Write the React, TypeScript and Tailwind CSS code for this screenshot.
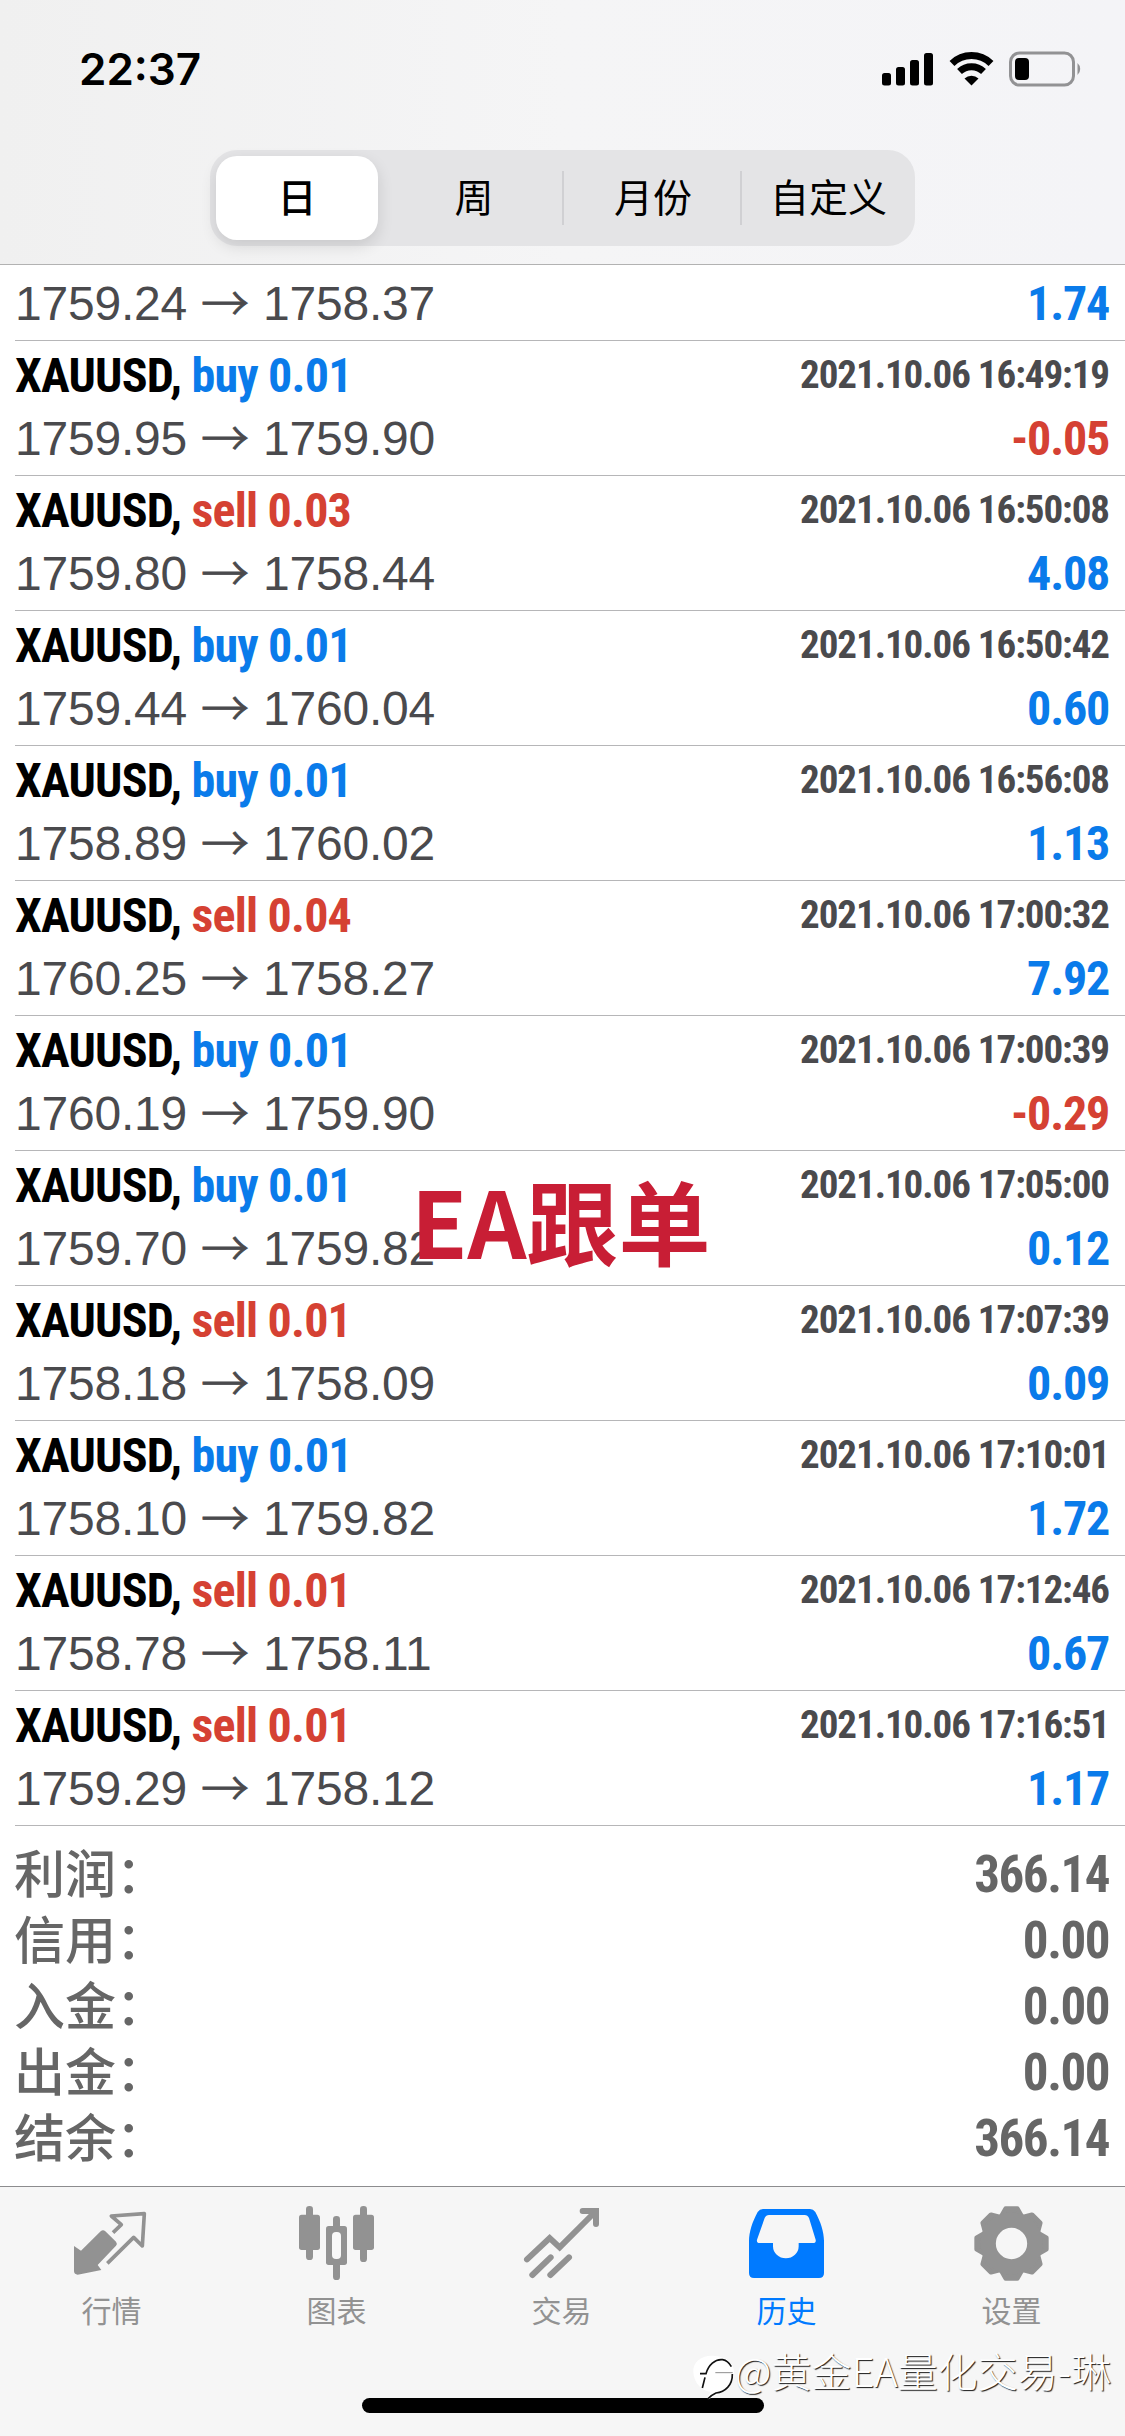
import type { ReactNode } from 'react';
import clsx from 'clsx';

interface Deal {
  side: 'buy' | 'sell';
  volume: string;
  time: string;
  open: string;
  close: string;
  profit: string;
}

const deals: Deal[] = [
  { side: 'buy', volume: '0.01', time: '2021.10.06 16:49:19', open: '1759.95', close: '1759.90', profit: '-0.05' },
  { side: 'sell', volume: '0.03', time: '2021.10.06 16:50:08', open: '1759.80', close: '1758.44', profit: '4.08' },
  { side: 'buy', volume: '0.01', time: '2021.10.06 16:50:42', open: '1759.44', close: '1760.04', profit: '0.60' },
  { side: 'buy', volume: '0.01', time: '2021.10.06 16:56:08', open: '1758.89', close: '1760.02', profit: '1.13' },
  { side: 'sell', volume: '0.04', time: '2021.10.06 17:00:32', open: '1760.25', close: '1758.27', profit: '7.92' },
  { side: 'buy', volume: '0.01', time: '2021.10.06 17:00:39', open: '1760.19', close: '1759.90', profit: '-0.29' },
  { side: 'buy', volume: '0.01', time: '2021.10.06 17:05:00', open: '1759.70', close: '1759.82', profit: '0.12' },
  { side: 'sell', volume: '0.01', time: '2021.10.06 17:07:39', open: '1758.18', close: '1758.09', profit: '0.09' },
  { side: 'buy', volume: '0.01', time: '2021.10.06 17:10:01', open: '1758.10', close: '1759.82', profit: '1.72' },
  { side: 'sell', volume: '0.01', time: '2021.10.06 17:12:46', open: '1758.78', close: '1758.11', profit: '0.67' },
  { side: 'sell', volume: '0.01', time: '2021.10.06 17:16:51', open: '1759.29', close: '1758.12', profit: '1.17' },
];

const totals = [
  { label: '利润：', value: '366.14' },
  { label: '信用：', value: '0.00' },
  { label: '入金：', value: '0.00' },
  { label: '出金：', value: '0.00' },
  { label: '结余：', value: '366.14' },
];

const CONDENSED = "font-['Roboto','Liberation_Sans',sans-serif] [font-stretch:75%] font-bold";
const CJK = "font-['Noto_Sans_CJK_SC',sans-serif]";

function StatusBar() {
  return (
    <div className="flex h-[138px] items-center justify-between pl-[79px] pr-[43px]">
      <span className="font-['Inter',sans-serif] text-[44px] font-semibold leading-none">22:37</span>
      <div className="flex items-center gap-[15px]">
        <svg width="52" height="34" viewBox="0 0 52 34">
          <rect x="0" y="21" width="9" height="12.500" rx="2.500" />
          <rect x="14" y="15" width="9" height="18.500" rx="2.500" />
          <rect x="28" y="8" width="9" height="25.500" rx="2.500" />
          <rect x="42" y="1" width="9" height="32.500" rx="2.500" />
        </svg>
        <svg width="45" height="34" viewBox="0 0 45 34">
          <path d="M3 11.500a28 28 0 0 1 39 0M10.500 19.500a17.500 17.500 0 0 1 24 0" fill="none" stroke="#000" strokeWidth="7" />
          <path d="M15.500 26.500a10.500 10.500 0 0 1 14 0L22.500 33.500z" />
        </svg>
        <svg width="73" height="36" viewBox="0 0 73 36">
          <rect x="1.500" y="2" width="63" height="32" rx="9" fill="none" stroke="#929294" strokeWidth="3" />
          <rect x="6" y="7" width="14" height="22" rx="4" />
          <path d="M68.500 12a8 8 0 0 1 0 12z" fill="#929294" />
        </svg>
      </div>
    </div>
  );
}

function PeriodPicker() {
  return (
    <div className={`${CJK} mx-auto mt-3 flex h-24 w-[705px] items-center rounded-[27px] bg-[#e4e4e6] text-[39px] leading-none`}>
      <div className="flex h-full w-[174px] items-center pl-[6px]">
        <div className="flex h-[84px] w-[162px] items-center justify-center rounded-[21px] bg-white pb-[5px] font-medium shadow-[0_6px_16px_rgba(0,0,0,0.12)]">
          日
        </div>
      </div>
      <div className="w-[178px] pb-[5px] pl-[2px] text-center">周</div>
      <div className="flex h-[54px] w-[180px] items-center justify-center border-x-2 border-[#d0d0d3] pb-[5px] pl-[2px]">月份</div>
      <div className="w-[173px] pb-[5px] text-center">自定义</div>
    </div>
  );
}

function PriceLine({ open, close, profit }: Pick<Deal, 'open' | 'close' | 'profit'>) {
  return (
    <div className="flex h-[63px] items-center justify-between pr-4 leading-none">
      <p className="flex items-center gap-[14px] font-['Liberation_Sans',Arial,sans-serif] text-[48px] tracking-[-0.2px] text-[#4a4a4d]">
        {open}
        <span className={`${CJK} -mt-2 h-12 font-light leading-[48px] [-webkit-text-stroke:0.8px_#4a4a4d]`}>→</span>
        {close}
      </p>
      <span
        className={clsx(
          CONDENSED,
          'text-[48px] tracking-[-1.2px]',
          profit.startsWith('-') ? 'text-[#d54133]' : 'text-[#0a7bea]',
        )}
      >
        {profit}
      </span>
    </div>
  );
}

function DealRow({ deal }: { deal: Deal }) {
  return (
    <div className="ml-[15px] h-[135px] border-b border-[#b6b6b8] pt-[3px]">
      <div className={`${CONDENSED} flex h-[63px] items-center justify-between pr-4 leading-none`}>
        <p className="text-[48px] tracking-[-0.8px]">
          XAUUSD,{' '}
          <span className={deal.side === 'buy' ? 'text-[#0a7bea]' : 'text-[#d54133]'}>
            {deal.side} {deal.volume}
          </span>
        </p>
        <span className="text-[39px] tracking-[-1.05px] text-[#4a4a4d]">{deal.time}</span>
      </div>
      <PriceLine open={deal.open} close={deal.close} profit={deal.profit} />
    </div>
  );
}

function QuotesIcon() {
  return (
    <>
      <path d="M0 120L21 134L80 76q7-6 14 0L126 107q5 6 0 12L71 177L82 192L11 206q-10 0-11-10z" />
      <path d="M117 80L142 56L112 30L211 23L205 120L179 94L100 172" fill="none" stroke="currentColor" strokeWidth="11" strokeLinejoin="round" />
    </>
  );
}

function ChartIcon() {
  return (
    <>
      <rect x="21" y="0" width="21" height="162" rx="10" />
      <rect x="0" y="26" width="63" height="106" rx="8" />
      <rect x="183" y="0" width="21" height="168" rx="10" />
      <rect x="162" y="26" width="63" height="106" rx="8" />
      <rect x="102" y="30" width="21" height="192" rx="10" />
      <rect x="81" y="60" width="63" height="117" rx="8" />
      <rect x="99" y="78" width="27" height="81" rx="12" fill="#f8f8f8" />
    </>
  );
}

function TradeIcon() {
  return (
    <path
      d="M9 160L77 96L107 124L213 18M176 15H216V54M25 207L80 154M79 207L135 154"
      fill="none"
      stroke="currentColor"
      strokeWidth="18"
      strokeLinecap="round"
    />
  );
}

function HistoryIcon() {
  return (
    <path
      fillRule="evenodd"
      d="M42 9H183q10 0 16 9C215 47 225 79 225 104V201q0 15-15 15H15q-15 0-15-15V104C0 79 10 47 26 18q6-9 16-9zM60 27q-9 0-13 9L24 101q-2 10 8 10H72V121A38.500 36 0 0 0 149 121V111H192q10 0 8-10L180 36q-4-9-13-9z"
    />
  );
}

function SettingsIcon() {
  return (
    <>
      {[0, 45, 90, 135, 180, 225, 270, 315].map((angle) => (
        <path
          key={angle}
          d="M95 8H130L145 34H80z"
          transform={`rotate(${angle} 112.5 112.5)`}
          stroke="currentColor"
          strokeWidth="14"
          strokeLinejoin="round"
        />
      ))}
      <circle cx="112.500" cy="112.500" r="70" fill="none" stroke="currentColor" strokeWidth="46" />
    </>
  );
}

const tabs: { label: string; icon: ReactNode; active?: boolean }[] = [
  { label: '行情', icon: <QuotesIcon /> },
  { label: '图表', icon: <ChartIcon /> },
  { label: '交易', icon: <TradeIcon /> },
  { label: '历史', icon: <HistoryIcon />, active: true },
  { label: '设置', icon: <SettingsIcon /> },
];

function TabBar() {
  return (
    <nav className="relative h-[250px] border-t border-[#8c8c8e] bg-[#f6f6f6]">
      <div className="-ml-px mr-px grid grid-cols-5 pt-[19px]">
        {tabs.map((tab) => (
          <div key={tab.label} className={clsx('flex flex-col items-center', tab.active ? 'text-[#007aff]' : 'text-[#929292]')}>
            <svg width="75" height="75" viewBox="0 0 225 225" fill="currentColor" className="overflow-visible">
              {tab.icon}
            </svg>
            <span className={`${CJK} mt-[13px] text-[30px] leading-[30px]`}>{tab.label}</span>
          </div>
        ))}
      </div>
      <div className="absolute left-[362px] top-[211px] h-[15px] w-[402px] rounded-full bg-black" />
      <div className="absolute left-[690px] top-[151px] flex items-center">
        <svg width="48" height="60" viewBox="0 0 144 180" className="mt-1">
          <path d="M10 90C8 60 35 38 75 42C125 45 142 85 128 115C118 145 95 152 55 172C50 165 60 155 62 150C30 145 12 120 10 90z" fill="#fff" />
          <path d="M30 95H48C55 70 75 50 98 53Q114 56 124 74M127 96C128 130 105 150 78 153Q62 160 52 172M45 106L37 138" fill="none" stroke="#111" strokeWidth="5" />
          <path d="M76 92H128" stroke="#777" strokeWidth="2.500" />
        </svg>
        <span className={`${CJK} -ml-[3px] whitespace-nowrap text-[40px] font-light leading-[48px] text-white [text-shadow:1px_1px_1px_rgba(0,0,0,0.9)]`}>
          @黄金EA量化交易-琳
        </span>
      </div>
    </nav>
  );
}

export default function App() {
  return (
    <div className="relative flex h-[2436px] w-[1125px] flex-col overflow-hidden bg-white text-black">
      <header className="h-[265px] border-b border-[#b2b2b2] bg-linear-to-r from-[#f0f0f0] via-[#f5f5f6] to-[#f4f4f7]">
        <StatusBar />
        <PeriodPicker />
      </header>

      <main className="flex-1">
        {/* first deal is scrolled half under the header */}
        <div className="ml-[15px] h-[76px] border-b border-[#b6b6b8] pt-[7px]">
          <PriceLine open="1759.24" close="1758.37" profit="1.74" />
        </div>
        {deals.map((deal) => (
          <DealRow key={deal.time} deal={deal} />
        ))}

        <div className="pl-[14px] pr-4 pt-[15px] text-[#666]">
          {totals.map((row) => (
            <div key={row.label} className="flex h-[66px] items-center justify-between leading-none">
              <span className={`${CJK} -mt-[5px] text-[51px] font-medium leading-none`}>{row.label}</span>
              <span className={`${CONDENSED} text-[51px] tracking-[-1.5px]`}>{row.value}</span>
            </div>
          ))}
        </div>
      </main>

      <TabBar />

      <div className={`${CJK} absolute left-[411px] top-[1173px] whitespace-nowrap text-[92px] font-bold leading-none text-[#c81e35]`}>
        EA跟单
      </div>
    </div>
  );
}
